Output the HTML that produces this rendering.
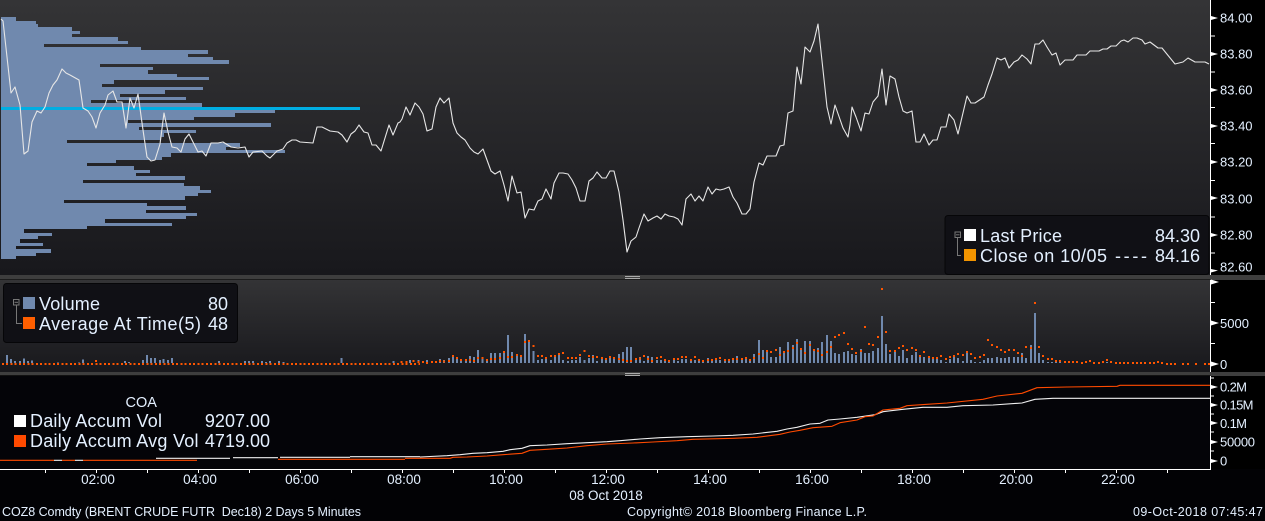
<!DOCTYPE html>
<html><head><meta charset="utf-8"><style>
html,body{margin:0;padding:0;background:#000;width:1265px;height:521px;overflow:hidden}
svg{display:block}
text{font-family:"Liberation Sans",sans-serif;fill:#e4f0ff;white-space:pre}
.l{font-size:18px}.a{font-size:13.5px}.y{font-size:13px}.f{font-size:12.5px}
</style></head><body>
<svg width="1265" height="521" viewBox="0 0 1265 521" xmlns="http://www.w3.org/2000/svg">
<defs>
<linearGradient id="g1" x1="0" y1="0" x2="0" y2="1"><stop offset="0" stop-color="#343436"/><stop offset="1" stop-color="#18181c"/></linearGradient>
</defs>
<rect width="1265" height="521" fill="#000"/>
<rect x="0" y="0" width="1210" height="275" fill="url(#g1)"/>
<rect x="0" y="279" width="1210" height="93" fill="url(#g1)"/>
<rect x="0" y="376" width="1210" height="93" fill="#040408"/>
<rect x="0" y="469" width="1265" height="52" fill="#020205"/>
<rect x="1211" y="376" width="54" height="93" fill="#000"/>
<!-- separators -->
<rect x="0" y="275" width="1265" height="5" fill="#3e3e3e"/><rect x="0" y="279" width="1210" height="1" fill="#1c1c1c"/>
<rect x="0" y="372" width="1265" height="4" fill="#3e3e3e"/><rect x="0" y="375" width="1210" height="1" fill="#111"/>
<path d="M625 276.5h15M625 278.5h15M625 373.5h15M625 375.5h15" stroke="#aaa" stroke-width="1"/>
<!-- profile -->
<path shape-rendering="crispEdges" fill="#7089ae" d="M1 17H16V21H36V24H38V27H72V31H80V34H72V37H118V41H128V44H44V47H141V50H208V54H188V57H213V60H229V64H100V67H153V70H148V74H177V77H209V80H114V84H102V87H203V90H165V94H120V97H186V100H91V103H202V107H240V110H275V113H235V117H194V120H128V123H271V127H139V130H196V133H164V137H161V140H67V143H240V147H226V150H285V153H171V157H162V160H116V163H87V166H134V170H150V173H136V176H185V180H83V183H184V186H200V190H211V193H198V196H185V200H64V203H147V206H186V210H146V213H197V216H186V219H105V223H172V226H87V229H24V233H52V236H38V239H20V243H43V246H16V249H51V253H36V256H16V259H1Z"/>
<rect x="1" y="107" width="359" height="3" fill="#00aee2"/>
<!-- price -->
<polyline fill="none" stroke="#e6e6e6" stroke-width="1.1" stroke-linejoin="round" points="1,19 3,21 7,57 11,93 15,87 20,105 24,154 28,151 32,122 37,111 41,113 45,107 49,93 53,85 57,80 62,69 66,73 70,75 79,80 83,108 88,111 92,117 96,128 100,113 105,105 108,95 113,91 117,102 122,102 126,128 130,98 134,108 138,94 143,130 147,157 151,161 155,160 160,144 164,113 168,132 172,147 177,148 181,152 185,139 189,134 193,142 198,152 202,151 206,156 211,143 218,143 223,142 231,147 238,148 245,147 249,157 253,152 262,151 267,156 270,158 277,151 283,149 287,143 292,140 296,140 300,142 313,143 317,127 322,127 330,131 338,132 342,135 347,142 351,134 355,131 359,125 364,132 368,133 372,145 376,145 381,151 389,125 393,135 398,123 400,122 402,119 406,107 410,115 415,103 419,107 423,114 427,131 432,129 436,107 440,98 444,103 449,98 453,123 457,133 461,137 465,140 470,148 474,152 478,154 483,149 491,171 495,174 500,171 504,185 508,201 512,176 517,193 521,192 525,218 529,209 534,210 538,201 542,199 546,189 551,199 554,183 559,173 563,173 568,174 572,180 576,188 580,201 585,201 589,181 593,178 597,172 602,178 606,178 610,171 614,171 619,192 623,220 627,252 631,241 636,237 639,228 644,214 648,221 653,218 657,216 661,219 665,214 669,216 674,217 678,219 682,225 686,199 691,194 695,201 699,196 703,201 708,187 712,194 716,189 720,190 724,189 729,187 733,197 737,203 742,214 746,214 750,209 754,182 759,163 763,165 767,156 776,156 780,146 784,145 788,113 793,111 797,67 801,84 805,47 810,52 814,41 818,24 823,70 827,107 831,124 835,105 843,128 848,137 850,125 852,107 856,117 861,131 865,113 869,114 873,102 878,96 882,69 886,105 890,76 895,79 899,97 903,111 907,113 912,111 916,142 920,142 924,134 929,145 933,140 937,140 941,127 946,127 949,114 954,120 958,134 967,96 971,103 975,103 984,97 988,85 992,74 997,58 1001,60 1005,58 1009,68 1014,62 1018,60 1022,55 1027,59 1031,64 1035,44 1039,44 1043,40 1047,47 1052,55 1056,53 1060,65 1065,60 1073,60 1077,55 1086,55 1090,51 1099,51 1103,49 1107,49 1111,46 1116,46 1121,41 1124,40 1128,42 1133,38 1137,38 1142,40 1145,44 1150,42 1158,48 1162,48 1175,64 1183,62 1188,58 1195,62 1205,62 1209,64"/>
<!-- y axis price -->
<path d="M1210.5 0V275" stroke="#fff" stroke-width="1"/>
<path fill="#fff" d="M1211 16l7 2-7 2zM1211 52l7 2-7 2zM1211 88l7 2-7 2zM1211 124l7 2-7 2zM1211 160l7 2-7 2zM1211 196l7 2-7 2zM1211 233l7 2-7 2zM1211 269l7 1.5-7 2z"/>
<path stroke="#fff" stroke-width="1" d="M1211 36h4M1211 72h4M1211 107.500h4M1211 143.500h4M1211 180.500h4M1211 217h4M1211 253h4"/>
<text class="y" x="1220" y="22.500">84.00</text><text class="y" x="1220" y="58.500">83.80</text><text class="y" x="1220" y="94.500">83.60</text><text class="y" x="1220" y="130.500">83.40</text><text class="y" x="1220" y="166.500">83.20</text><text class="y" x="1220" y="203.500">83.00</text><text class="y" x="1220" y="239.500">82.80</text><text class="y" x="1220" y="271.500">82.60</text>
<!-- price legend -->
<rect x="945" y="215.500" width="264" height="59" rx="3" fill="#101015" stroke="#060608"/>
<path d="M957.500 238V255.500H961" fill="none" stroke="#777"/><rect x="955" y="232" width="5.500" height="5.500" fill="none" stroke="#777"/><path d="M956 234.800h3.500" stroke="#777"/>
<rect x="964" y="229" width="12" height="12" fill="#fff"/><rect x="964" y="249" width="12" height="12" fill="#f29400"/>
<text class="l" x="980" y="242" textLength="82">Last Price</text><text class="l" x="1200" y="242" text-anchor="end">84.30</text>
<text class="l" x="980" y="262" textLength="127">Close on 10/05</text><text class="l" x="1115" y="262" textLength="32">----</text><text class="l" x="1200" y="262" text-anchor="end">84.16</text>
<!-- volume bars -->
<g fill="none" stroke="#7089ae" stroke-width="6" shape-rendering="crispEdges">
<path transform="translate(0,275) scale(.33333)" d="M21 264v-24M33 264v-12M45 264v-6M60 264v-6M72 264v-14M84 264v-6M96 264v-8M174 264v-2M237 264v-2M249 264v-10M375 264v-6M387 264v-3M429 264v-9M441 264v-24M453 264v-15M465 264v-15M480 264v-9M491 264v-12M504 264v-9M516 264v-15M657 264v-6M735 264v-6M747 264v-6M759 264v-6M786 264v-6M798 264v-3M810 264v-6M837 264v-6M850 264v-3M1025 264v-15M1180 264v-6M1205 264v-3M1230 264v-9M1255 264v-9"/>
<path transform="translate(420,275) scale(.33333)" d="M21 264v-9M60 264v-12M72 264v-9M87 264v-15M99 264v-21M111 264v-15M123 264v-9M138 264v-9M150 264v-21M162 264v-18M174 264v-39M188 264v-15M201 264v-9M213 264v-30M225 264v-30M240 264v-30M252 264v-36M264 264v-84M276 264v-33M291 264v-27M303 264v-21M315 264v-87M327 264v-66M341 264v-36M354 264v-9M366 264v-12M378 264v-15M393 264v-9M405 264v-21M417 264v-27M429 264v-9M444 264v-6M456 264v-9M468 264v-9M480 264v-18M494 264v-9M507 264v-15M519 264v-24M531 264v-6M546 264v-18M558 264v-12M570 264v-21M582 264v-15M597 264v-27M609 264v-33M621 264v-48M633 264v-48M648 264v-12M660 264v-18M672 264v-6M684 264v-21M696 264v-18M711 264v-9M723 264v-9M735 264v-9M747 264v-6M762 264v-9M774 264v-6M786 264v-12M798 264v-12M813 264v-9M825 264v-9M837 264v-6M849 264v-6M864 264v-15M876 264v-12M888 264v-15M900 264v-9M915 264v-9M927 264v-12M939 264v-15M951 264v-21M966 264v-15M978 264v-15M990 264v-9M1002 264v-27M1017 264v-69M1029 264v-39M1041 264v-36M1053 264v-18M1068 264v-18M1080 264v-48M1092 264v-30M1104 264v-63M1119 264v-54M1131 264v-72M1143 264v-39M1155 264v-66M1170 264v-66M1182 264v-39M1194 264v-45M1206 264v-63M1221 264v-84M1233 264v-66M1245 264v-30M1257 264v-27"/>
<path transform="translate(840,275) scale(.33333)" d="M12 264v-33M24 264v-36M36 264v-27M48 264v-24M63 264v-42M75 264v-30M87 264v-30M99 264v-36M114 264v-45M126 264v-141M138 264v-57M150 264v-27M165 264v-36M177 264v-21M189 264v-39M201 264v-15M216 264v-24M228 264v-33M240 264v-21M252 264v-18M267 264v-15M279 264v-15M291 264v-15M303 264v-9M318 264v-3M330 264v-12M342 264v-24M354 264v-15M369 264v-6M381 264v-33M393 264v-9M405 264v-3M420 264v-3M432 264v-9M444 264v-15M456 264v-15M471 264v-18M483 264v-15M495 264v-15M507 264v-18M522 264v-18M534 264v-18M546 264v-30M558 264v-15M573 264v-54M585 264v-150M597 264v-30M609 264v-9M624 264v-3M636 264v-3M648 264v-3M660 264v-3M801 264v-3"/>
</g>
<!-- volume dots -->
<g fill="none" stroke="#ff5500" stroke-width="6" stroke-linecap="square" shape-rendering="crispEdges">
<path transform="translate(0,275) scale(.33333)" stroke-linecap="butt" stroke-dasharray="6 6.75" d="M6 267H1260"/>
<path transform="translate(0,275) scale(.33333)" d="M288 258h.1M1205 261h.1M1220 261h.1M1240 258h.1M1255 261h.1"/>
<path transform="translate(420,275) scale(.33333)" d="M9 261h.1M21 264h.1M36 261h.1M48 261h.1M60 258h.1M72 259h.1M87 258h.1M99 243h.1M111 249h.1M123 255h.1M138 255h.1M150 255h.1M162 258h.1M174 249h.1M188 249h.1M201 255h.1M213 252h.1M225 252h.1M240 249h.1M252 231h.1M264 246h.1M276 246h.1M291 240h.1M303 243h.1M315 201h.1M327 198h.1M341 213h.1M354 243h.1M366 243h.1M378 249h.1M393 243h.1M405 243h.1M417 237h.1M429 234h.1M444 249h.1M456 249h.1M468 249h.1M480 240h.1M494 228h.1M507 243h.1M519 246h.1M531 246h.1M546 249h.1M558 252h.1M570 246h.1M582 249h.1M597 252h.1M609 255h.1M621 258h.1M633 258h.1M648 252h.1M660 250h.1M672 243h.1M684 252h.1M696 258h.1M711 249h.1M723 246h.1M735 255h.1M747 258h.1M762 252h.1M774 252h.1M786 246h.1M798 246h.1M813 255h.1M825 246h.1M837 255h.1M849 258h.1M864 255h.1M876 255h.1M888 252h.1M900 249h.1M915 255h.1M927 255h.1M939 252h.1M951 252h.1M966 252h.1M978 249h.1M990 255h.1M1002 249h.1M1017 237h.1M1029 249h.1M1041 228h.1M1053 231h.1M1068 225h.1M1080 240h.1M1092 231h.1M1104 228h.1M1119 219h.1M1131 204h.1M1143 222h.1M1155 234h.1M1170 210h.1M1182 225h.1M1194 228h.1M1206 240h.1M1221 231h.1M1233 216h.1M1245 186h.1M1257 180h.1"/>
<path transform="translate(840,275) scale(.33333)" d="M12 174h.1M24 207h.1M36 222h.1M48 234h.1M63 228h.1M75 156h.1M87 207h.1M99 210h.1M114 186h.1M126 42h.1M138 171h.1M150 228h.1M165 228h.1M177 219h.1M189 213h.1M201 225h.1M216 219h.1M228 225h.1M240 243h.1M252 231h.1M267 246h.1M279 249h.1M291 249h.1M303 243h.1M318 252h.1M330 246h.1M342 243h.1M354 237h.1M369 240h.1M381 231h.1M393 237h.1M405 249h.1M420 246h.1M432 240h.1M444 195h.1M456 210h.1M471 216h.1M483 225h.1M495 231h.1M507 225h.1M522 225h.1M534 234h.1M546 243h.1M558 216h.1M573 219h.1M585 84h.1M597 216h.1M609 243h.1M624 252h.1M636 252h.1M648 258h.1M660 258h.1M675 261h.1M687 261h.1M699 261h.1M711 261h.1M726 264h.1M738 261h.1M750 258h.1M762 264h.1M777 264h.1M789 261h.1M801 255h.1M813 261h.1M828 264h.1M840 264h.1M852 264h.1M864 264h.1M879 264h.1M891 264h.1M903 264h.1M915 264h.1M930 264h.1M942 264h.1M954 261h.1M966 264h.1M981 267h.1M993 267h.1M1005 267h.1M1029 267h.1M1044 267h.1M1068 267h.1M1095 267h.1M1107 267h.1"/>
</g>
<!-- volume axis -->
<path d="M1210.5 280V372" stroke="#fff" stroke-width="1"/>
<path fill="#fff" d="M1211 279.500l8 2.500-8 2.500zM1211 320.500l8 2.500-8 2.500zM1211 361.500l8 2.500-8 2.500z"/>
<path stroke="#fff" stroke-width="1" d="M1211 302.500h4M1211 343.500h4"/>
<text class="y" x="1220" y="328">5000</text><text class="y" x="1220" y="369">0</text>
<!-- volume legend -->
<rect x="3.500" y="283.500" width="234" height="59" rx="3" fill="#101015" stroke="#060608"/>
<path d="M16.500 305V323.500H22" fill="none" stroke="#777"/><rect x="13.500" y="299.500" width="5.500" height="5.500" fill="none" stroke="#777"/><path d="M14.500 302.300h3.500" stroke="#777"/>
<rect x="23" y="297" width="12" height="12" fill="#7089ae"/><rect x="23" y="317" width="12" height="12" fill="#ff5f00"/>
<text class="l" x="39" y="310" textLength="61">Volume</text><text class="l" x="228" y="310" text-anchor="end">80</text>
<text class="l" x="39" y="330" textLength="162">Average At Time(5)</text><text class="l" x="228" y="330" text-anchor="end">48</text>
<!-- bottom panel lines -->
<g fill="none" stroke-width="1.100" stroke-linejoin="round">
<path stroke="#f0f0f0" d="M54 460.300H62M75 460.300H83M156 458.300H230M233 457.700H278M280 457.300H350M350 456.700H420"/>
<path stroke="#ff4a00" d="M0 460.300H54M62 460.300H75M83 460.300H197M278 459.300H405M405 458.300H420"/>
<polyline stroke="#f0f0f0" points="420,457 447,455.700 460,454.700 473,453.300 487,452.700 503,451.300 510,449.700 522,448.300 530,445.700 547,445 567,443.700 587,442.700 607,441.700 620,440.700 640,439 660,437.700 687,436.700 713,436 733,435.300 753,434 777,431.300 787,429 797,427.300 810,424 820,423.300 828,420 840,419 857,417.300 875,414.700 883,411.700 903,409.300 923,407.300 947,407.300 963,405.700 993,405 1022,403 1035,399.300 1053,398.300 1210,398.300"/>
<polyline stroke="#ff4a00" points="420,458.300 450,458.300 453,457.300 467,457 487,456 503,454.700 522,453.300 530,450.300 547,449.300 567,448 587,445.700 607,444 633,443 653,442 677,440.700 693,439.300 733,438.300 757,437.300 780,434.300 790,432 800,430.300 813,427.700 832,426.300 840,422.700 857,420 865,416.700 873,416 883,410 900,408.300 907,405.700 927,404.300 947,403 983,399.300 997,396 1022,393.300 1037,387.700 1067,387 1117,386.300 1120,385.300 1210,385.300"/>
</g>
<!-- bottom legend -->
<rect x="14" y="415" width="12" height="12" fill="#fff"/><rect x="14" y="435" width="12" height="12" fill="#ff4a00"/>
<text x="125.500" y="407" style="font-size:14.500px">COA</text>
<text class="l" x="30" y="427" textLength="132">Daily Accum Vol</text><text class="l" x="270" y="427" text-anchor="end">9207.00</text>
<text class="l" x="30" y="447" textLength="168.500">Daily Accum Avg Vol</text><text class="l" x="270" y="447" text-anchor="end">4719.00</text>
<!-- bottom axes -->
<path d="M0 469.500H1211M1210.500 376V469" stroke="#fff" stroke-width="1" fill="none"/>
<path stroke="#fff" stroke-width="1" d="M45.500 470v3M96.500 470v3M147.500 470v3M198.500 470v3M249.500 470v3M300.500 470v3M351.500 470v3M402.500 470v3M453.500 470v3M504.500 470v3M555.500 470v3M606.500 470v3M657.500 470v3M708.500 470v3M759.500 470v3M810.500 470v3M861.500 470v3M912.500 470v3M963.500 470v3M1014.500 470v3M1065.500 470v3M1116.500 470v3M1167.500 470v3"/>
<path fill="#fff" d="M1211 385l7 2-7 2zM1211 403l7 2-7 2zM1211 421l7 2-7 2zM1211 440l7 2-7 2zM1211 459l7 2-7 2z"/>
<path stroke="#fff" stroke-width="1" d="M1211 378h3M1211 396h3M1211 414h3M1211 432h3M1211 451h3"/>
<text class="y" x="1220" y="391.500" textLength="27">0.2M</text><text class="y" x="1220" y="409.500" textLength="33.500">0.15M</text><text class="y" x="1220" y="428" textLength="27">0.1M</text><text class="y" x="1220" y="446.500" textLength="35">50000</text><text class="y" x="1220" y="465.500">0</text>
<g text-anchor="middle">
<text class="a" x="98" y="484">02:00</text><text class="a" x="200" y="484">04:00</text><text class="a" x="302" y="484">06:00</text><text class="a" x="404" y="484">08:00</text><text class="a" x="506" y="484">10:00</text><text class="a" x="608" y="484">12:00</text><text class="a" x="710" y="484">14:00</text><text class="a" x="812" y="484">16:00</text><text class="a" x="914" y="484">18:00</text><text class="a" x="1016" y="484">20:00</text><text class="a" x="1118" y="484">22:00</text>
<text class="a" x="606" y="500">08 Oct 2018</text>
</g>
<text class="f" x="2" y="516" textLength="359">COZ8 Comdty (BRENT CRUDE FUTR  Dec18) 2 Days 5 Minutes</text>
<text class="f" x="627" y="516" textLength="240">Copyright© 2018 Bloomberg Finance L.P.</text>
<text class="f" x="1133" y="516" textLength="130">09-Oct-2018 07:45:47</text>
</svg>
</body></html>
